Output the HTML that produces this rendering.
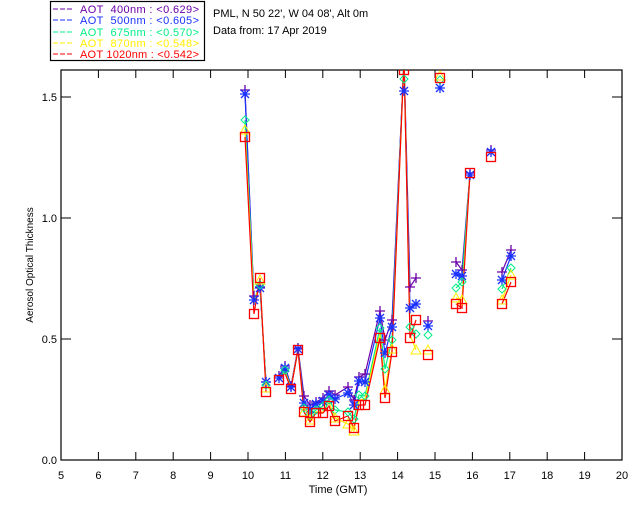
<!DOCTYPE html>
<html><head><meta charset="utf-8"><style>
html,body{margin:0;padding:0;background:#fff;width:640px;height:512px;overflow:hidden}
svg{display:block;font-family:"Liberation Sans",sans-serif}
</style></head><body>
<svg width="640" height="512" viewBox="0 0 640 512" xmlns="http://www.w3.org/2000/svg">
<defs>
<g id="mp" stroke="#6a00a8" stroke-width="1.3" fill="none"><path d="M-5 0H5M0 -5V5"/></g>
<g id="mb" stroke="#1a32ff" stroke-width="1.3" fill="none"><path d="M-5 0H5M0 -5V5M-4 -4L4 4M-4 4L4 -4"/></g>
<g id="mg" stroke="#00ee88" stroke-width="1" fill="none"><path d="M0 -4L4 0L0 4L-4 0Z"/></g>
<g id="my" stroke="#ffee00" stroke-width="1" fill="none"><path d="M0 -5L5 4H-5Z"/></g>
<g id="mr" stroke="#ff0000" stroke-width="1.3" fill="none"><rect x="-4.5" y="-4.5" width="9" height="9"/></g>
<clipPath id="c"><rect x="61" y="70" width="561" height="390"/></clipPath>
</defs>
<rect x="50.5" y="1.5" width="154" height="59" fill="none" stroke="#000" stroke-width="1.2"/>
<g font-size="11">
<line x1="53" y1="9" x2="74" y2="9" stroke="#6a00a8" stroke-dasharray="5 2"/><text x="80" y="13" fill="#6a00a8" xml:space="preserve" textLength="119" lengthAdjust="spacing">AOT  400nm : &lt;0.629&gt;</text>
<line x1="53" y1="20" x2="74" y2="20" stroke="#1a32ff" stroke-dasharray="5 2"/><text x="80" y="24" fill="#1a32ff" xml:space="preserve" textLength="119" lengthAdjust="spacing">AOT  500nm : &lt;0.605&gt;</text>
<line x1="53" y1="32" x2="74" y2="32" stroke="#00ee88" stroke-dasharray="5 2"/><text x="80" y="36" fill="#00ee88" xml:space="preserve" textLength="119" lengthAdjust="spacing">AOT  675nm : &lt;0.570&gt;</text>
<line x1="53" y1="43" x2="74" y2="43" stroke="#ffee00" stroke-dasharray="5 2"/><text x="80" y="47" fill="#ffee00" xml:space="preserve" textLength="119" lengthAdjust="spacing">AOT  870nm : &lt;0.548&gt;</text>
<line x1="53" y1="54" x2="74" y2="54" stroke="#ff0000" stroke-dasharray="5 2"/><text x="80" y="58" fill="#ff0000" xml:space="preserve" textLength="119" lengthAdjust="spacing">AOT 1020nm : &lt;0.542&gt;</text>
<text x="213" y="17" fill="#000">PML, N 50 22', W 04 08', Alt 0m</text>
<text x="213" y="34" fill="#000">Data from: 17 Apr 2019</text>
</g>
<rect x="61" y="70" width="561" height="390" fill="none" stroke="#000" stroke-width="1.2"/>
<g stroke="#000" stroke-width="1">
<path d="M98.4 460v-8M135.8 460v-8M173.2 460v-8M210.6 460v-8M248 460v-8M285.4 460v-8M322.8 460v-8M360.2 460v-8M397.6 460v-8M435 460v-8M472.4 460v-8M509.8 460v-8M547.2 460v-8M584.6 460v-8"/>
<path d="M98.4 70v8M135.8 70v8M173.2 70v8M210.6 70v8M248 70v8M285.4 70v8M322.8 70v8M360.2 70v8M397.6 70v8M435 70v8M472.4 70v8M509.8 70v8M547.2 70v8M584.6 70v8"/>
<path d="M61 339h10M61 218h10M61 97h10M622 339h-10M622 218h-10M622 97h-10"/>
</g>
<g font-size="11" fill="#000" text-anchor="middle">
<text x="61" y="479">5</text><text x="98.4" y="479">6</text><text x="135.8" y="479">7</text><text x="173.2" y="479">8</text><text x="210.6" y="479">9</text><text x="248" y="479">10</text><text x="285.4" y="479">11</text><text x="322.8" y="479">12</text><text x="360.2" y="479">13</text><text x="397.6" y="479">14</text><text x="435" y="479">15</text><text x="472.4" y="479">16</text><text x="509.8" y="479">17</text><text x="547.2" y="479">18</text><text x="584.6" y="479">19</text><text x="622" y="479">20</text>
<text x="338" y="493">Time (GMT)</text>
</g>
<g font-size="11" fill="#000" text-anchor="end">
<text x="57" y="464">0.0</text><text x="57" y="343">0.5</text><text x="57" y="222">1.0</text><text x="57" y="101">1.5</text>
</g>
<text transform="translate(33,265) rotate(-90)" font-size="10" text-anchor="middle" fill="#000">Aerosol Optical Thickness</text>
<g clip-path="url(#c)" fill="none" stroke-width="1.2">
<g stroke="#6a00a8">
<polyline points="245,90 254,300 260,287 266,382"/>
<polyline points="279,376 285,366 291,386 298,348 304,396 310,405 316,402 323,398 329,391 335,395 348,387 354,400 359,377 365,374 380,311 385,340 392,320 404,60 410,287 416,278"/>
<polyline points="456,262 462,270 470,173"/><polyline points="502,272 511,250"/>
</g>
<g stroke="#1a32ff">
<polyline points="245,94 254,300 260,288 266,382"/>
<polyline points="279,378 285,368 291,387 298,349 304,403 310,409 316,404 323,401 329,395 335,399 348,393 354,405 359,381 365,382 380,318 385,353 392,327 404,60 410,308 416,304"/>
<polyline points="456,274 462,276 470,175"/><polyline points="502,280 511,256"/>
</g>
<g stroke="#00ee88">
<polyline points="245,120 254,300 260,285 266,385"/>
<polyline points="279,378 285,370 291,388 298,350 304,408 310,415 316,410 323,406 329,400 335,410 348,412 354,419 359,395 365,396 380,328 385,369 392,340 404,60 410,327 416,334"/>
<polyline points="456,288 462,282 470,173"/><polyline points="502,289 511,268"/>
</g>
<g stroke="#ffee00">
<polyline points="245,130 254,305 260,280 266,388"/>
<polyline points="279,380 285,372 291,388 298,350 304,412 310,420 316,412 323,412 329,402 335,418 348,424 354,431 359,400 365,399 380,334 385,390 392,349 404,60 410,335 416,350"/>
<polyline points="456,298 462,300 470,173"/><polyline points="502,300 511,275"/>
</g>
<g stroke="#ff0000">
<polyline points="245,137 254,314 260,278 266,392"/>
<polyline points="279,380 285,373 291,389 298,350 304,412 310,422 316,413 323,413 329,406 335,421 348,416 354,428 359,405 365,405 380,338 385,398 392,352 404,60 410,338 416,320"/>
<polyline points="456,304 462,308 470,173"/><polyline points="502,304 511,282"/>
</g>
<g>
<use href="#mp" x="245" y="90"/><use href="#mp" x="254" y="296"/><use href="#mp" x="260" y="287"/><use href="#mp" x="266" y="382"/><use href="#mp" x="279" y="376"/><use href="#mp" x="285" y="366"/><use href="#mp" x="291" y="386"/><use href="#mp" x="298" y="348"/><use href="#mp" x="304" y="396"/><use href="#mp" x="310" y="405"/><use href="#mp" x="316" y="402"/><use href="#mp" x="323" y="398"/><use href="#mp" x="329" y="391"/><use href="#mp" x="335" y="395"/><use href="#mp" x="348" y="387"/><use href="#mp" x="354" y="400"/><use href="#mp" x="359" y="377"/><use href="#mp" x="365" y="374"/><use href="#mp" x="380" y="311"/><use href="#mp" x="385" y="340"/><use href="#mp" x="392" y="320"/><use href="#mp" x="410" y="287"/><use href="#mp" x="416" y="278"/><use href="#mp" x="428" y="321"/><use href="#mp" x="456" y="262"/><use href="#mp" x="462" y="270"/><use href="#mp" x="470" y="173"/><use href="#mp" x="491" y="150"/><use href="#mp" x="502" y="272"/><use href="#mp" x="511" y="250"/>
<use href="#mb" x="245" y="94"/><use href="#mb" x="254" y="300"/><use href="#mb" x="260" y="288"/><use href="#mb" x="266" y="382"/><use href="#mb" x="279" y="378"/><use href="#mb" x="285" y="368"/><use href="#mb" x="291" y="387"/><use href="#mb" x="298" y="349"/><use href="#mb" x="304" y="403"/><use href="#mb" x="310" y="409"/><use href="#mb" x="316" y="404"/><use href="#mb" x="323" y="401"/><use href="#mb" x="329" y="395"/><use href="#mb" x="335" y="399"/><use href="#mb" x="348" y="393"/><use href="#mb" x="354" y="405"/><use href="#mb" x="359" y="381"/><use href="#mb" x="365" y="382"/><use href="#mb" x="380" y="318"/><use href="#mb" x="385" y="353"/><use href="#mb" x="392" y="327"/><use href="#mb" x="404" y="91"/><use href="#mb" x="410" y="308"/><use href="#mb" x="416" y="304"/><use href="#mb" x="428" y="326"/><use href="#mb" x="440" y="88"/><use href="#mb" x="456" y="274"/><use href="#mb" x="462" y="276"/><use href="#mb" x="470" y="175"/><use href="#mb" x="491" y="152"/><use href="#mb" x="502" y="280"/><use href="#mb" x="511" y="256"/>
<use href="#mg" x="245" y="120"/><use href="#mg" x="260" y="285"/><use href="#mg" x="266" y="385"/><use href="#mg" x="285" y="370"/><use href="#mg" x="304" y="408"/><use href="#mg" x="310" y="415"/><use href="#mg" x="316" y="410"/><use href="#mg" x="323" y="406"/><use href="#mg" x="329" y="400"/><use href="#mg" x="335" y="410"/><use href="#mg" x="348" y="412"/><use href="#mg" x="354" y="419"/><use href="#mg" x="359" y="395"/><use href="#mg" x="365" y="396"/><use href="#mg" x="380" y="328"/><use href="#mg" x="385" y="369"/><use href="#mg" x="392" y="340"/><use href="#mg" x="404" y="79"/><use href="#mg" x="410" y="327"/><use href="#mg" x="416" y="334"/><use href="#mg" x="428" y="335"/><use href="#mg" x="440" y="80"/><use href="#mg" x="456" y="288"/><use href="#mg" x="462" y="282"/><use href="#mg" x="502" y="289"/><use href="#mg" x="511" y="268"/>
<use href="#my" x="245" y="130"/><use href="#my" x="260" y="280"/><use href="#my" x="266" y="388"/><use href="#my" x="304" y="412"/><use href="#my" x="310" y="420"/><use href="#my" x="335" y="418"/><use href="#my" x="348" y="424"/><use href="#my" x="354" y="431"/><use href="#my" x="385" y="390"/><use href="#my" x="392" y="349"/><use href="#my" x="416" y="350"/><use href="#my" x="428" y="350"/><use href="#my" x="440" y="76"/><use href="#my" x="456" y="298"/><use href="#my" x="462" y="300"/><use href="#my" x="502" y="300"/><use href="#my" x="511" y="275"/>
<use href="#mr" x="245" y="137"/><use href="#mr" x="254" y="314"/><use href="#mr" x="260" y="278"/><use href="#mr" x="266" y="392"/><use href="#mr" x="279" y="380"/><use href="#mr" x="291" y="389"/><use href="#mr" x="298" y="350"/><use href="#mr" x="304" y="412"/><use href="#mr" x="310" y="422"/><use href="#mr" x="316" y="413"/><use href="#mr" x="323" y="413"/><use href="#mr" x="329" y="406"/><use href="#mr" x="335" y="421"/><use href="#mr" x="348" y="416"/><use href="#mr" x="354" y="428"/><use href="#mr" x="359" y="405"/><use href="#mr" x="365" y="405"/><use href="#mr" x="380" y="338"/><use href="#mr" x="385" y="398"/><use href="#mr" x="392" y="352"/><use href="#mr" x="404" y="70"/><use href="#mr" x="410" y="338"/><use href="#mr" x="416" y="320"/><use href="#mr" x="428" y="355"/><use href="#mr" x="440" y="78"/><use href="#mr" x="456" y="304"/><use href="#mr" x="462" y="308"/><use href="#mr" x="470" y="173"/><use href="#mr" x="491" y="157"/><use href="#mr" x="502" y="304"/><use href="#mr" x="511" y="282"/>
</g>
</g>
</svg>
</body></html>
